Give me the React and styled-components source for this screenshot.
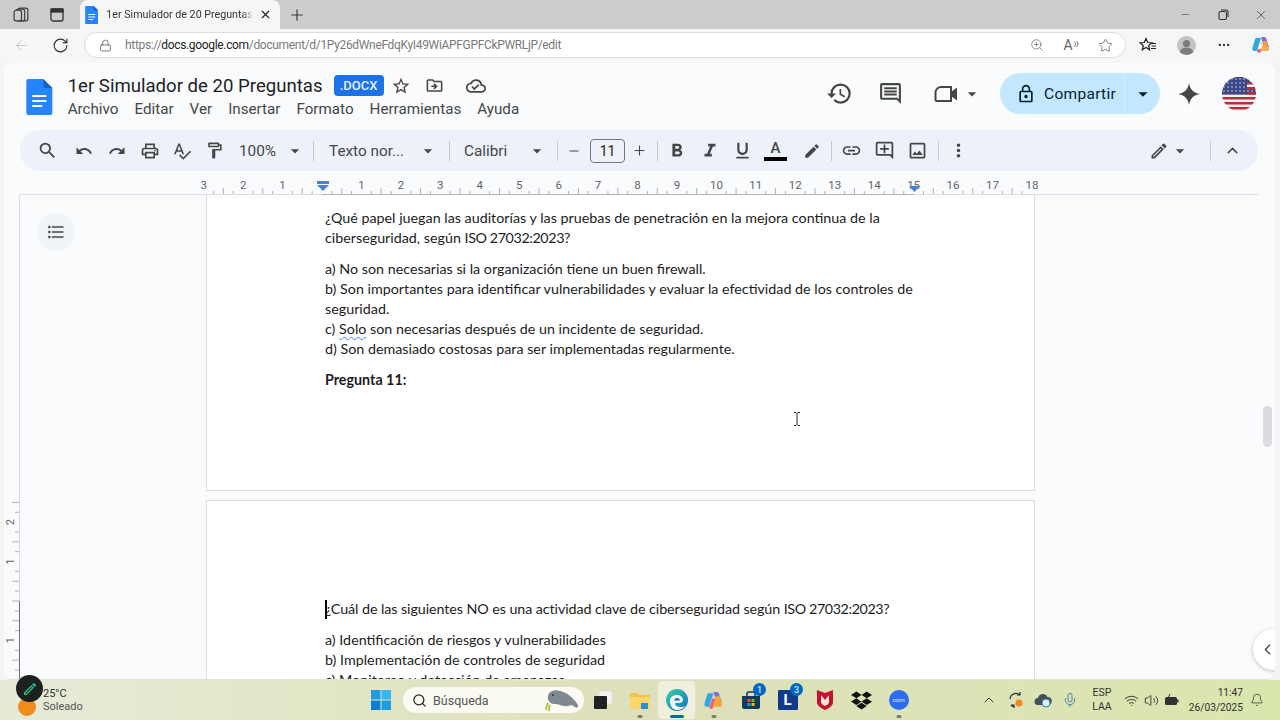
import React from "react";
import styled, { createGlobalStyle } from "styled-components";
import {
  ArrowLeft, RotateCw, Plus, X, Minus, Star, ZoomIn, MoreHorizontal, Lock, Search, ChevronUp, ChevronLeft, Mic, Wifi, Volume2, Bell,
} from "lucide-react";
import {
  MdHistory, MdOutlineComment, MdLockOutline, MdArrowDropDown, MdOutlineStarBorder,
  MdOutlineDriveFileMove, MdOutlineCloudDone, MdSearch, MdUndo, MdRedo, MdOutlinePrint, MdSpellcheck,
  MdOutlineFormatPaint, MdFormatBold, MdFormatItalic, MdFormatUnderlined, MdEdit, MdLink, MdOutlineAddComment,
  MdOutlineImage, MdMoreVert, MdOutlineModeEdit, MdFormatListBulleted,
} from "react-icons/md";
import { FaDropbox } from "react-icons/fa";

const GlobalStyle = createGlobalStyle`
  html, body { margin: 0; padding: 0; background: #f3f3f3; }
  * { box-sizing: border-box; }
`;

const Screen = styled.div`
  width: 1280px;
  height: 720px;
  position: relative;
  overflow: hidden;
  display: flex;
  flex-direction: column;
  background: #f4f4f4;
  font-family: Roboto, "Liberation Sans", sans-serif;
  color: #444746;
`;

/* browser chrome */
const TabStrip = styled.div`
  height: 29px;
  flex: none;
  display: flex;
  align-items: center;
  background: #cccccc;
  color: #3c3c3c;
`;
const StripBtn = styled.div`
  width: ${(p) => p.$w || 36}px;
  height: 29px;
  flex: none;
  display: flex;
  align-items: center;
  justify-content: center;
`;
const Tab = styled.div`
  width: 200px;
  height: 29px;
  flex: none;
  margin-left: 8px;
  display: flex;
  align-items: center;
  padding-left: 5px;
  background: #f6f6f6;
  border-radius: 8px 8px 0 0;
`;
const TabTitle = styled.span`
  width: 148px;
  margin-left: 8px;
  font-size: 10.7px;
  color: #333;
  white-space: nowrap;
  overflow: hidden;
  -webkit-mask-image: linear-gradient(90deg, #000 92%, transparent);
  mask-image: linear-gradient(90deg, #000 92%, transparent);
`;
const TabClose = styled.div`
  width: 22px;
  display: flex;
  justify-content: center;
  color: #222;
`;
const WindowBtns = styled.div`
  margin-left: auto;
  display: flex;
`;
const AddressRow = styled.div`
  height: 34px;
  flex: none;
  display: flex;
  align-items: center;
  padding-bottom: 2px;
  background: #f6f6f6;
`;
const NavBtn = styled.div`
  width: ${(p) => p.$w || 37}px;
  height: 26px;
  flex: none;
  display: flex;
  align-items: center;
  justify-content: center;
  color: ${(p) => p.$c || "#333"};
`;
const UrlPill = styled.div`
  width: 1042px;
  height: 26px;
  margin-left: 5px;
  flex: none;
  display: flex;
  align-items: center;
  padding-left: 14px;
  background: #fff;
  border: 1px solid #dedede;
  border-radius: 13px;
  color: #555;
`;
const UrlText = styled.span`
  margin-left: 13px;
  font-size: 12px;
  letter-spacing: -0.33px;
  color: #7a7a7a;
  b { font-weight: 400; color: #222; }
`;
const UrlTools = styled.div`
  margin-left: auto;
  display: flex;
  align-items: center;
  padding-right: 3px;
  color: #6a6a6a;
`;
const ReadAloud = styled.span`
  width: 34px;
  display: flex;
  align-items: center;
  justify-content: center;
  font-size: 14px;
  color: #666;
`;
const Profile = styled.div`
  width: 19px;
  height: 19px;
  border-radius: 50%;
  background: #c4c4c4;
  overflow: hidden;
`;

/* docs header */
const DocsArea = styled.div`
  flex: 1;
  min-height: 0;
  margin: 0 5px 0 4px;
  display: flex;
  flex-direction: column;
  background: #f9fbfd;
  border-radius: 8px;
  border-bottom: 1px solid #e2e2e2;
  overflow: hidden;
`;
const Header = styled.div`
  height: 67px;
  flex: none;
  display: flex;
  align-items: center;
  padding: 0 19px 6px 22px;
`;
const DocMark = styled.div`
  margin-top: 6px;
  display: flex;
`;
const TitleBlock = styled.div`
  margin: 3px 0 0 15px;
  display: flex;
  flex-direction: column;
`;
const TitleRow = styled.div`
  display: flex;
  align-items: center;
  height: 27px;
`;
const DocTitle = styled.span`
  font-size: 18.6px;
  color: #1f1f1f;
  white-space: nowrap;
`;
const Badge = styled.span`
  margin-left: 11px;
  width: 50px;
  height: 21px;
  display: flex;
  align-items: center;
  justify-content: center;
  background: #1a73e8;
  border-radius: 4px;
  color: #e8f0fe;
  font-size: 13px;
  font-weight: 500;
`;
const TitleIcon = styled.div`
  width: 34px;
  display: flex;
  justify-content: center;
  color: #444746;
  &:nth-of-type(3) { margin-left: 7px; }
`;
const Menu = styled.div`
  margin-top: 1px;
  display: flex;
  gap: 16px;
  font-size: 15.2px;
  color: #444746;
`;
const HeaderRight = styled.div`
  margin-left: auto;
  display: flex;
  align-items: center;
`;
const ActionBtn = styled.div`
  width: ${(p) => p.$w || 32}px;
  margin-left: ${(p) => p.$ml || 0}px;
  display: flex;
  justify-content: center;
  color: #444746;
`;
const SharePill = styled.div`
  width: 160px;
  height: 41px;
  margin-left: 16px;
  display: flex;
  background: #c2e7ff;
  border-radius: 21px;
  color: #001d35;
`;
const ShareMain = styled.div`
  width: 125px;
  display: flex;
  align-items: center;
  padding-left: 16px;
  gap: 8px;
  border-right: 1px solid #d8f0ff;
  font-size: 15.5px;
  letter-spacing: 0.3px;
`;
const ShareCaret = styled.div`
  flex: 1;
  display: flex;
  align-items: center;
  justify-content: center;
`;
const Avatar = styled.svg`
  width: 34px;
  height: 34px;
  margin-left: 16px;
  display: block;
`;

/* format toolbar */
const Toolbar = styled.div`
  height: 41px;
  flex: none;
  margin: 0 17px 0 16px;
  display: flex;
  align-items: center;
  padding-left: 11px;
  background: #edf2fa;
  border-radius: 20px;
  color: #444746;
`;
const ToolBtn = styled.div`
  width: ${(p) => p.$w || 33}px;
  height: 30px;
  flex: none;
  margin-left: ${(p) => p.$ml || 0}px;
  display: flex;
  align-items: center;
  justify-content: center;
  svg { flex: none; }
`;
const ToolSelect = styled.div`
  width: ${(p) => p.$w}px;
  flex: none;
  padding-left: ${(p) => p.$pl || 0}px;
  font-size: 15.3px;
  color: #444746;
  white-space: nowrap;
`;
const Divider = styled.div`
  width: 1px;
  height: 20px;
  flex: none;
  margin: 0 ${(p) => p.$mr ?? 7}px 0 ${(p) => p.$ml ?? 7}px;
  background: #c7c7c7;
`;
const SizeBox = styled.div`
  width: 35px;
  height: 24px;
  flex: none;
  display: flex;
  align-items: center;
  justify-content: center;
  border: 1px solid #747775;
  border-radius: 4px;
  font-size: 14px;
  color: #1f1f1f;
`;
const ColorA = styled.div`
  width: 33px;
  display: flex;
  flex-direction: column;
  align-items: center;
  font-size: 15px;
  line-height: 17px;
  font-weight: 500;
  &::after {
    content: "";
    width: 23px;
    height: 4px;
    background: #000;
  }
`;

/* ruler + page */
const RulerSvg = styled.svg`
  display: block;
  flex: none;
  width: 1238px;
  height: 17px;
  margin: 7px 0 0 16px;
`;
const Canvas = styled.div`
  flex: 1;
  min-height: 0;
  position: relative;
  display: flex;
  overflow: hidden;
`;
const SideRuler = styled.svg`
  width: 16px;
  height: 484px;
  flex: none;
  display: block;
`;
const Pages = styled.div`
  padding-left: 186px;
`;
const Page = styled.div`
  width: 829px;
  height: ${(p) => p.$h}px;
  margin-top: ${(p) => p.$mt || 0}px;
  padding: ${(p) => p.$pt}px 119px 0 118px;
  background: #fff;
  border: 1px solid #dadce0;
  border-top-width: ${(p) => (p.$first ? 0 : 1)}px;
  font-family: Lato, "Liberation Sans", sans-serif;
  font-size: 14.3px;
  line-height: 20px;
  color: #1c1c1c;
`;
const Para = styled.p`
  margin: 0 0 11px;
  font-weight: ${(p) => (p.$bold ? 700 : 400)};
  letter-spacing: ${(p) => p.$track || 0}px;
`;
const Standard = styled.span`
  letter-spacing: -0.4px;
`;
const Misspelled = styled.span`
  text-decoration: underline wavy #4285f4 1px;
  text-underline-offset: 2px;
`;
const Caret = styled.span`
  display: inline-block;
  width: 2px;
  height: 19px;
  margin-right: -2px;
  vertical-align: -5px;
  background: #000;
`;
const OutlineBtn = styled.div`
  position: absolute;
  left: 33px;
  top: 18px;
  width: 38px;
  height: 38px;
  display: flex;
  align-items: center;
  justify-content: center;
  border-radius: 50%;
  background: #eff2f6;
  color: #444746;
`;
const ScrollThumb = styled.div`
  position: absolute;
  left: 1259px;
  top: 211px;
  width: 9px;
  height: 41px;
  border-radius: 5px;
  background: #dadce0;
`;
const SideToggle = styled.div`
  position: absolute;
  right: -20px;
  top: 434px;
  width: 42px;
  height: 41px;
  padding-left: 6px;
  display: flex;
  align-items: center;
  border-radius: 50%;
  background: #fff;
  box-shadow: 0 1px 4px rgba(60, 64, 67, 0.3);
  color: #444746;
`;
const IBeam = styled.svg`
  position: absolute;
  left: 789px;
  top: 217px;
  width: 8px;
  height: 14px;
`;

/* taskbar */
const Taskbar = styled.div`
  height: 40px;
  flex: none;
  display: flex;
  align-items: center;
  background: linear-gradient(90deg, #e6ebd8 0%, #e2e6c6 25%, #dedfbb 50%, #dde3b6 75%, #dae6ae 100%);
  color: #222;
`;
const Weather = styled.div`
  width: 362px;
  flex: none;
  display: flex;
  align-items: center;
  padding-left: 18px;
`;
const Sun = styled.div`
  width: 18px;
  height: 18px;
  flex: none;
  margin-top: 14px;
  border-radius: 50%;
  background: #ef8c1d;
`;
const WeatherText = styled.div`
  margin-left: 7px;
  font-size: 11px;
  line-height: 13px;
  color: #333;
  span { display: block; color: #555; }
`;
const TaskIcon = styled.div`
  width: 37px;
  height: 38px;
  flex: none;
  position: relative;
  display: flex;
  align-items: center;
  justify-content: center;
  border-radius: 4px;
  background: ${(p) => (p.$active ? "rgba(255,255,255,0.5)" : "transparent")};
  &::after {
    content: "";
    display: ${(p) => (p.$dot ? "block" : "none")};
    position: absolute;
    bottom: 1px;
    left: 50%;
    width: ${(p) => (p.$active ? 14 : 5)}px;
    height: 3px;
    transform: translateX(-50%);
    border-radius: 2px;
    background: ${(p) => (p.$active ? "#0067c0" : "#7a7a6e")};
  }
`;
const SearchPill = styled.div`
  width: 181px;
  height: 26px;
  flex: none;
  margin-left: 4px;
  display: flex;
  align-items: center;
  padding-left: 9px;
  background: #fbfbf3;
  border-radius: 13px;
  font-size: 12.5px;
  color: #555;
  overflow: hidden;
`;
const SearchLabel = styled.span`
  margin-left: 6px;
`;
const Manatee = styled.svg`
  width: 38px;
  height: 24px;
  margin-left: auto;
  margin-right: 3px;
`;
const Count = styled.span`
  position: absolute;
  top: 2px;
  right: 3px;
  width: 13px;
  height: 13px;
  display: flex;
  align-items: center;
  justify-content: center;
  border-radius: 50%;
  background: #0067c0;
  color: #fff;
  font-size: 9px;
`;
const LetterTile = styled.div`
  width: 20px;
  height: 20px;
  display: flex;
  align-items: center;
  justify-content: center;
  background: #123a8a;
  border-radius: 1px;
  color: #fff;
  font-size: 15px;
  font-weight: 700;
`;
const ZoomDot = styled.div`
  width: 20px;
  height: 20px;
  display: flex;
  align-items: center;
  justify-content: center;
  border-radius: 50%;
  background: #2d6cf0;
  color: #dfe9ff;
  font-size: 5px;
`;
const Tray = styled.div`
  margin-left: auto;
  display: flex;
  align-items: center;
  padding-right: 9px;
`;
const TrayIcon = styled.div`
  width: ${(p) => p.$w || 27}px;
  flex: none;
  display: flex;
  justify-content: center;
  color: #333;
`;
const Lang = styled.div`
  width: 38px;
  flex: none;
  text-align: center;
  font-size: 10.5px;
  line-height: 14px;
  color: #333;
`;
const Clock = styled.div`
  width: 62px;
  flex: none;
  text-align: right;
  font-size: 10.2px;
  line-height: 15px;
  color: #333;
  white-space: nowrap;
`;
const EditBubble = styled.div`
  position: absolute;
  left: 16px;
  top: 675px;
  width: 27px;
  height: 27px;
  display: flex;
  align-items: center;
  justify-content: center;
  border-radius: 50%;
  background: #1c2120;
  color: #22c38e;
`;

const DocIcon = ({ size = 36 }) => (
  <svg width={size * 0.74} height={size} viewBox="0 0 26 36">
    <path d="M2 0h15l9 9v25a2 2 0 0 1-2 2H2a2 2 0 0 1-2-2V2a2 2 0 0 1 2-2z" fill="#2684fc" />
    <path d="M17 0l9 9h-7a2 2 0 0 1-2-2z" fill="#1a5fc4" />
    <path d="M6 17h14M6 22h14M6 27h10" stroke="#fff" strokeWidth="2" />
  </svg>
);

const Stripes = () => {
  const rows = [];
  for (let i = 0; i < 7; i++) {
    rows.push(<rect key={i} x="0" y={i * 5} width="34" height="2.5" fill="#b5303f" />);
  }
  return rows;
};

const ticks = () => {
  const out = [];
  const step = 39.44 / 4;
  for (let i = -12; i <= 72; i++) {
    if (i % 4 === 0) continue;
    const x = 322 + i * step;
    const h = i % 2 === 0 ? 6 : 3;
    out.push(<line key={i} x1={x} x2={x} y1={194} y2={194 - h} stroke="#9aa0a6" strokeWidth="0.8" />);
  }
  return out;
};

const rulerNumbers = () => {
  const out = [];
  for (let i = -3; i <= 18; i++) {
    if (i === 0) continue;
    out.push(
      <text key={i} x={322 + i * 39.44} y={189} fontSize="11.5" fill="#5f6368" textAnchor="middle" fontFamily="Roboto, sans-serif">
        {Math.abs(i)}
      </text>
    );
  }
  return out;
};

const sideTicks = () => {
  const out = [];
  const zero = 406;
  for (let i = -10; i <= 8; i++) {
    const y = zero + i * 9.86;
    if (i % 4 === 0 && i !== 0) continue;
    out.push(<line key={i} x1={i % 2 === 0 ? 8 : 11} x2="15" y1={y} y2={y} stroke="#9aa0a6" strokeWidth="0.8" />);
  }
  [[-2, "2"], [-1, "1"], [1, "1"]].forEach(([n, label]) => {
    const y = zero + n * 39.44;
    out.push(
      <text key={"n" + n} x="7" y={y} fontSize="11" fill="#5f6368" textAnchor="middle" dominantBaseline="middle" fontFamily="Roboto, sans-serif" transform={`rotate(-90 7 ${y})`}>
        {label}
      </text>
    );
  });
  return out;
};

export default function App() {
  return (
    <Screen>
      <GlobalStyle />
      <TabStrip>
        <StripBtn $w={42}>
          <svg width="17" height="17" viewBox="0 0 16 16" fill="none" stroke="#3c3c3c" strokeWidth="1.1">
            <rect x="5" y="2" width="9" height="12" rx="2" />
            <rect x="3" y="3" width="8" height="11" rx="2" fill="#ccc" />
            <rect x="1" y="4" width="7" height="10" rx="2" fill="#ccc" />
          </svg>
        </StripBtn>
        <StripBtn $w={30}>
          <svg width="14" height="14" viewBox="0 0 14 14" fill="none" stroke="#333" strokeWidth="1.3">
            <rect x="1" y="1" width="12" height="12" rx="2" />
            <rect x="1" y="1" width="12" height="3" fill="#333" />
          </svg>
        </StripBtn>
        <Tab>
          <DocIcon size={18} />
          <TabTitle>1er Simulador de 20 Preguntas.docx</TabTitle>
          <TabClose><X size={13} strokeWidth={2} /></TabClose>
        </Tab>
        <StripBtn $w={34}><Plus size={18} strokeWidth={1.6} /></StripBtn>
        <WindowBtns>
          <StripBtn $w={38}><Minus size={11} strokeWidth={1.3} /></StripBtn>
          <StripBtn $w={38}>
            <svg width="11" height="11" viewBox="0 0 11 11" fill="none" stroke="#333" strokeWidth="1.1">
              <rect x="1" y="2.5" width="7.5" height="8" rx="1.5" />
              <path d="M3 1h5a2 2 0 0 1 2 2v5" />
            </svg>
          </StripBtn>
          <StripBtn $w={38}><X size={14} strokeWidth={1.2} /></StripBtn>
        </WindowBtns>
      </TabStrip>

      <AddressRow>
        <NavBtn $w={42} $c="#c4c4c4"><ArrowLeft size={17} strokeWidth={1.3} /></NavBtn>
        <NavBtn $w={37}><RotateCw size={17} strokeWidth={1.6} /></NavBtn>
        <UrlPill>
          <Lock size={13} strokeWidth={1.4} />
          <UrlText>https://<b>docs.google.com</b>/document/d/1Py26dWneFdqKyI49WiAPFGPFCkPWRLjP/edit</UrlText>
          <UrlTools>
            <NavBtn $w={34} $c="#6a6a6a"><ZoomIn size={14} strokeWidth={1.3} /></NavBtn>
            <ReadAloud>
              A
              <svg width="6" height="10" viewBox="0 0 6 10" fill="none" stroke="#666">
                <path d="M1 2c2 1 2 3 0 5M3.500 1c2 2 2 4 0 6" />
              </svg>
            </ReadAloud>
            <NavBtn $w={34} $c="#555"><Star size={15} strokeWidth={1.2} /></NavBtn>
          </UrlTools>
        </UrlPill>
        <NavBtn $w={44} $c="#222">
          <svg width="18" height="16" viewBox="0 0 18 16" fill="none" stroke="#222" strokeWidth="1.2">
            <path d="M7 1.500l1.700 4 4.300.3-3.300 2.800 1 4.200L7 10.500l-3.700 2.300 1-4.200L1 5.800l4.300-.3z" />
            <path d="M13 6.500h4M12.500 9h4.500M12 11.500h5" />
          </svg>
        </NavBtn>
        <NavBtn $w={32}>
          <Profile>
            <svg width="19" height="19" viewBox="0 0 19 19">
              <circle cx="9.5" cy="7.5" r="3.6" fill="#7b7b7b" />
              <ellipse cx="9.5" cy="16" rx="6.5" ry="4.5" fill="#7b7b7b" />
            </svg>
          </Profile>
        </NavBtn>
        <NavBtn $w={44}><MoreHorizontal size={14} /></NavBtn>
        <NavBtn $w={30}>
          <svg width="20" height="20" viewBox="0 0 20 20">
            <path d="M5 3h5L6 16H3.5C1.5 16 1 14 1.6 12.2L4 4.6C4.3 3.7 4.6 3 5 3z" fill="#2fa8e0" />
            <path d="M10 2h3c1.500 0 2 .8 2.400 2L18 12h-5z" fill="#7b6cf0" />
            <path d="M6 17l3-9h3l-2 8c-.3 1-1 2-2.500 2z" fill="#f0558a" />
            <path d="M12 6h4l2 7c.4 1.500-.6 3-2.200 3H9z" fill="#f7a43b" opacity=".9" />
            <path d="M8.500 8.500h3.500l-2 5.500H7z" fill="#fff" />
          </svg>
        </NavBtn>
      </AddressRow>

      <DocsArea>
        <Header>
          <DocMark><DocIcon size={36} /></DocMark>
          <TitleBlock>
            <TitleRow>
              <DocTitle>1er Simulador de 20 Preguntas</DocTitle>
              <Badge>.DOCX</Badge>
              <TitleIcon><MdOutlineStarBorder size={20} /></TitleIcon>
              <TitleIcon><MdOutlineDriveFileMove size={19} /></TitleIcon>
              <TitleIcon><MdOutlineCloudDone size={20} /></TitleIcon>
            </TitleRow>
            <Menu>
              <span>Archivo</span>
              <span>Editar</span>
              <span>Ver</span>
              <span>Insertar</span>
              <span>Formato</span>
              <span>Herramientas</span>
              <span>Ayuda</span>
            </Menu>
          </TitleBlock>
          <HeaderRight>
            <ActionBtn><MdHistory size={27} /></ActionBtn>
            <ActionBtn $ml={19}><MdOutlineComment size={25} /></ActionBtn>
            <ActionBtn $w={28} $ml={26}>
              <svg width="24" height="18" viewBox="0 0 24 18">
                <path d="M7 2h10v14H3a1.500 1.500 0 0 1-1.500-1.500V7.500C1.500 4.500 4 2 7 2z" fill="none" stroke="#444746" strokeWidth="2" />
                <path d="M17 7l6-4.500v13L17 11z" fill="#444746" />
              </svg>
            </ActionBtn>
            <ActionBtn $w={24}><MdArrowDropDown size={20} /></ActionBtn>
            <SharePill>
              <ShareMain><MdLockOutline size={20} />Compartir</ShareMain>
              <ShareCaret><MdArrowDropDown size={22} /></ShareCaret>
            </SharePill>
            <ActionBtn $w={34} $ml={12}>
              <svg width="24" height="24" viewBox="0 0 24 24">
                <path d="M12 1c1 6.500 4.500 10 11 11-6.500 1-10 4.500-11 11-1-6.500-4.500-10-11-11 6.500-1 10-4.500 11-11z" fill="#444746" />
              </svg>
            </ActionBtn>
            <Avatar viewBox="0 0 34 34">
              <defs>
                <clipPath id="flagClip"><circle cx="17" cy="17" r="17" /></clipPath>
                <pattern id="flagStars" width="4" height="4" patternUnits="userSpaceOnUse">
                  <rect width="4" height="4" fill="#3a4a86" />
                  <circle cx="2" cy="2" r="0.8" fill="#cfd3e6" />
                </pattern>
              </defs>
              <g clipPath="url(#flagClip)">
                <rect width="34" height="34" fill="#f1eeee" />
                <Stripes />
                <rect width="34" height="17.500" fill="url(#flagStars)" x="0" y="0" />
                <rect x="25" y="0" width="9" height="2.500" fill="#b5303f" />
                <rect x="25" y="5" width="9" height="2.500" fill="#b5303f" />
                <rect x="25" y="7.500" width="9" height="2.500" fill="#f1eeee" />
                <rect x="25" y="10" width="9" height="2.500" fill="#b5303f" />
                <rect x="25" y="15" width="9" height="2.500" fill="#b5303f" />
              </g>
            </Avatar>
          </HeaderRight>
        </Header>

        <Toolbar>
          <ToolBtn><MdSearch size={21} /></ToolBtn>
          <ToolBtn $ml={3}><MdUndo size={18} /></ToolBtn>
          <ToolBtn><MdRedo size={18} /></ToolBtn>
          <ToolBtn><MdOutlinePrint size={20} /></ToolBtn>
          <ToolBtn $w={32}><MdSpellcheck size={20} /></ToolBtn>
          <ToolBtn><MdOutlineFormatPaint size={19} /></ToolBtn>
          <ToolSelect $w={52} $pl={8}>100%</ToolSelect>
          <ToolBtn $w={24}><MdArrowDropDown size={20} /></ToolBtn>
          <Divider $ml={6} />
          <ToolSelect $w={95} $pl={8}>Texto nor...</ToolSelect>
          <ToolBtn $w={24}><MdArrowDropDown size={20} /></ToolBtn>
          <Divider $ml={9} />
          <ToolSelect $w={72} $pl={7}>Calibri</ToolSelect>
          <ToolBtn $w={16}><MdArrowDropDown size={20} /></ToolBtn>
          <Divider $ml={12} $mr={8} />
          <ToolBtn $w={16}><Minus size={14} strokeWidth={1.8} /></ToolBtn>
          <ToolBtn $w={8} />
          <SizeBox>11</SizeBox>
          <ToolBtn $w={29}><Plus size={15} strokeWidth={1.8} /></ToolBtn>
          <Divider $ml={3} $mr={2} />
          <ToolBtn><MdFormatBold size={22} /></ToolBtn>
          <ToolBtn><MdFormatItalic size={22} /></ToolBtn>
          <ToolBtn><MdFormatUnderlined size={21} /></ToolBtn>
          <ColorA>A</ColorA>
          <ToolBtn $ml={3}><MdEdit size={18} /></ToolBtn>
          <Divider $ml={3} $mr={3} />
          <ToolBtn><MdLink size={21} /></ToolBtn>
          <ToolBtn><MdOutlineAddComment size={21} /></ToolBtn>
          <ToolBtn><MdOutlineImage size={21} /></ToolBtn>
          <Divider $ml={4} $mr={3} />
          <ToolBtn><MdMoreVert size={21} /></ToolBtn>
          <ToolBtn $ml={167}><MdOutlineModeEdit size={20} /></ToolBtn>
          <ToolBtn $w={10}><MdArrowDropDown size={20} /></ToolBtn>
          <Divider $ml={25} $mr={2} />
          <ToolBtn $w={38}><ChevronUp size={17} /></ToolBtn>
        </Toolbar>

        <RulerSvg viewBox="20 178 1238 17">
          <line x1="20" x2="1258" y1="194.500" y2="194.500" stroke="#dadce0" />
          <line x1="322" x2="914" y1="194.500" y2="194.500" stroke="#b0b4b8" />
          {ticks()}
          {rulerNumbers()}
          <rect x="317" y="181" width="12" height="3" fill="#4a7fd4" />
          <path d="M317 185h12l-6 6z" fill="#4a7fd4" />
          <path d="M909 186h11l-5.500 6z" fill="#4a7fd4" />
        </RulerSvg>

        <Canvas>
          <SideRuler viewBox="0 0 16 484">
            <line x1="15.500" x2="15.500" y1="0" y2="406" stroke="#dadce0" />
            <line x1="15.500" x2="15.500" y1="406" y2="484" stroke="#707478" />
            {sideTicks()}
          </SideRuler>
          <Pages>
            <Page $h={296} $pt={13} $first>
              <Para>¿Qué papel juegan las auditorías y las pruebas de penetración en la mejora continua de la ciberseguridad, según <Standard>ISO 27032:2023?</Standard></Para>
              <Para>
                a) No son necesarias si la organización tiene un buen firewall.<br />
                b) Son importantes para identificar vulnerabilidades y evaluar la efectividad de los controles de seguridad.<br />
                c) <Misspelled>Solo</Misspelled> son necesarias después de un incidente de seguridad.<br />
                d) Son demasiado costosas para ser implementadas regularmente.
              </Para>
              <Para $bold>Pregunta 11:</Para>
            </Page>
            <Page $h={300} $mt={9} $pt={98}>
              <Para $track={-0.08}><Caret />¿Cuál de las siguientes NO es una actividad clave de ciberseguridad según <Standard>ISO 27032:2023?</Standard></Para>
              <Para>
                a) Identificación de riesgos y vulnerabilidades<br />
                b) Implementación de controles de seguridad<br />
                c) Monitoreo y detección de amenazas
              </Para>
            </Page>
          </Pages>
          <OutlineBtn><MdFormatListBulleted size={20} /></OutlineBtn>
          <ScrollThumb />
          <SideToggle><ChevronLeft size={17} /></SideToggle>
          <IBeam viewBox="0 0 8 14">
            <path d="M1 .5h2l1 1 1-1h2M4 1.500v11M1 13.500h2l1-1 1 1h2" fill="none" stroke="#222" strokeWidth="1" />
          </IBeam>
        </Canvas>
      </DocsArea>

      <Taskbar>
        <Weather>
          <Sun />
          <WeatherText>25°C<span>Soleado</span></WeatherText>
        </Weather>
        <TaskIcon>
          <svg width="20" height="20" viewBox="0 0 20 20">
            <rect width="9.500" height="9.500" fill="#1b9de2" />
            <rect x="10.500" width="9.500" height="9.500" fill="#38b6f2" />
            <rect y="10.500" width="9.500" height="9.500" fill="#0f7fd0" />
            <rect x="10.500" y="10.500" width="9.500" height="9.500" fill="#1b9de2" />
          </svg>
        </TaskIcon>
        <SearchPill>
          <Search size={15} strokeWidth={2} color="#222" />
          <SearchLabel>Búsqueda</SearchLabel>
          <Manatee viewBox="0 0 38 24">
            <path d="M3 22c0-3 1-5 2-7M6 23c0-3 0-4 1-6" stroke="#a9c34a" strokeWidth="2" fill="none" />
            <path d="M5 8c1-5 7-7 12-5 6 1 12 6 16 11 1 2 3 4 2 5-2 1-4 0-6-2-3 1-8 2-12 0-2-1-3-1-6-1C7 16 4 12 5 8z" fill="#7f8a90" />
            <circle cx="10" cy="7" r="1" fill="#333" />
          </Manatee>
        </SearchPill>
        <TaskIcon>
          <svg width="20" height="20" viewBox="0 0 20 20">
            <rect x="6" y="1" width="13" height="13" rx="1" fill="#f3f3f0" stroke="#ddd" />
            <rect x="1" y="6" width="13" height="13" rx="1" fill="#222" />
          </svg>
        </TaskIcon>
        <TaskIcon $dot>
          <svg width="22" height="19" viewBox="0 0 22 19">
            <path d="M1 2h7l2 2h11v13a1 1 0 0 1-1 1H2a1 1 0 0 1-1-1z" fill="#f5c04a" />
            <rect x="1" y="6" width="20" height="12" rx="1" fill="#fbd669" />
            <rect x="12" y="12" width="7" height="6" fill="#2a8fd8" />
          </svg>
        </TaskIcon>
        <TaskIcon $dot $active>
          <svg width="24" height="24" viewBox="0 0 24 24">
            <defs>
              <linearGradient id="edgeA" x1="0" y1="0" x2="1" y2="1">
                <stop offset="0" stopColor="#3dd3a5" />
                <stop offset="1" stopColor="#0c6fc9" />
              </linearGradient>
            </defs>
            <circle cx="12" cy="12" r="11" fill="url(#edgeA)" />
            <path d="M5 13c0-4 3-6 7-6 3 0 6 2 6 5 0 2-2 3-4 3h-4c0 3 3 4 6 4 1 0 3-.5 4-1-2 3-5 4-8 4-4 0-7-4-7-9z" fill="#fff" opacity=".92" />
            <path d="M9 13c0-2 1.500-3 3-3s3 1 3 2.500H9z" fill="#0c6fc9" />
          </svg>
        </TaskIcon>
        <TaskIcon $dot>
          <svg width="21" height="21" viewBox="0 0 20 20">
            <path d="M5 3h5L6 16H3.500C1.500 16 1 14 1.600 12.200L4 4.600C4.300 3.700 4.600 3 5 3z" fill="#2fa8e0" />
            <path d="M10 2h3c1.500 0 2 .8 2.400 2L18 12h-5z" fill="#7b6cf0" />
            <path d="M6 17l3-9h3l-2 8c-.3 1-1 2-2.500 2z" fill="#f0558a" />
            <path d="M12 6h4l2 7c.4 1.500-.6 3-2.200 3H9z" fill="#f7a43b" />
          </svg>
        </TaskIcon>
        <TaskIcon>
          <svg width="20" height="20" viewBox="0 0 20 20">
            <path d="M1 6h18v11a2 2 0 0 1-2 2H3a2 2 0 0 1-2-2z" fill="#103a5e" />
            <path d="M6 6V4a2 2 0 0 1 2-2h4a2 2 0 0 1 2 2v2" fill="none" stroke="#103a5e" strokeWidth="1.500" />
            <rect x="6.500" y="9" width="3" height="3" fill="#f25022" />
            <rect x="10.500" y="9" width="3" height="3" fill="#7fba00" />
            <rect x="6.500" y="13" width="3" height="3" fill="#00a4ef" />
            <rect x="10.500" y="13" width="3" height="3" fill="#ffb900" />
          </svg>
          <Count>1</Count>
        </TaskIcon>
        <TaskIcon>
          <LetterTile>L</LetterTile>
          <Count>3</Count>
        </TaskIcon>
        <TaskIcon>
          <svg width="18" height="22" viewBox="0 0 18 22">
            <path d="M1 1l8 3 8-3v12c0 4-4 6-8 8-4-2-8-4-8-8z" fill="#c8102e" />
            <path d="M5 6l4 2 4-2v7c0 2-2 3-4 4-2-1-4-2-4-4z" fill="#f0ead8" />
            <path d="M5 6l4 5 4-5" fill="#c8102e" />
          </svg>
        </TaskIcon>
        <TaskIcon><FaDropbox size={21} color="#111" /></TaskIcon>
        <TaskIcon $dot><ZoomDot>zoom</ZoomDot></TaskIcon>
        <Tray>
          <TrayIcon><ChevronUp size={16} strokeWidth={1.5} /></TrayIcon>
          <TrayIcon>
            <svg width="18" height="18" viewBox="0 0 18 18" fill="none" stroke="#333" strokeWidth="1.200">
              <path d="M3 8a6 6 0 0 1 10-4M13 1v3h-3M4 14h3v3M4 14a6 6 0 0 0 3 2" />
              <circle cx="12" cy="12" r="3.500" fill="#f08a18" stroke="none" />
            </svg>
          </TrayIcon>
          <TrayIcon>
            <svg width="18" height="16" viewBox="0 0 18 16">
              <path d="M4 13a3.500 3.500 0 0 1 0-7 5 5 0 0 1 9.500-1A4 4 0 0 1 14 13z" fill="#46505a" />
              <circle cx="12" cy="11" r="4" fill="#e9f1f7" stroke="#2a7fc4" />
            </svg>
          </TrayIcon>
          <TrayIcon><Mic size={16} strokeWidth={1.300} color="#3d6fa8" /></TrayIcon>
          <Lang>ESP<br />LAA</Lang>
          <TrayIcon $w={20}><Wifi size={15} strokeWidth={1.500} /></TrayIcon>
          <TrayIcon $w={20}><Volume2 size={15} strokeWidth={1.500} /></TrayIcon>
          <TrayIcon $w={20}>
            <svg width="15" height="12" viewBox="0 0 15 12">
              <rect x="1" y="3" width="12" height="8" rx="1.500" fill="#333" />
              <rect x="13" y="5.500" width="1.500" height="3" fill="#333" />
              <path d="M6 0L3 6h3l-1 3" stroke="#333" fill="none" />
            </svg>
          </TrayIcon>
          <Clock>11:47<br />26/03/2025</Clock>
          <TrayIcon $w={28}><Bell size={14} strokeWidth={1.300} /></TrayIcon>
        </Tray>
      </Taskbar>
      <EditBubble><MdOutlineModeEdit size={16} /></EditBubble>
    </Screen>
  );
}
